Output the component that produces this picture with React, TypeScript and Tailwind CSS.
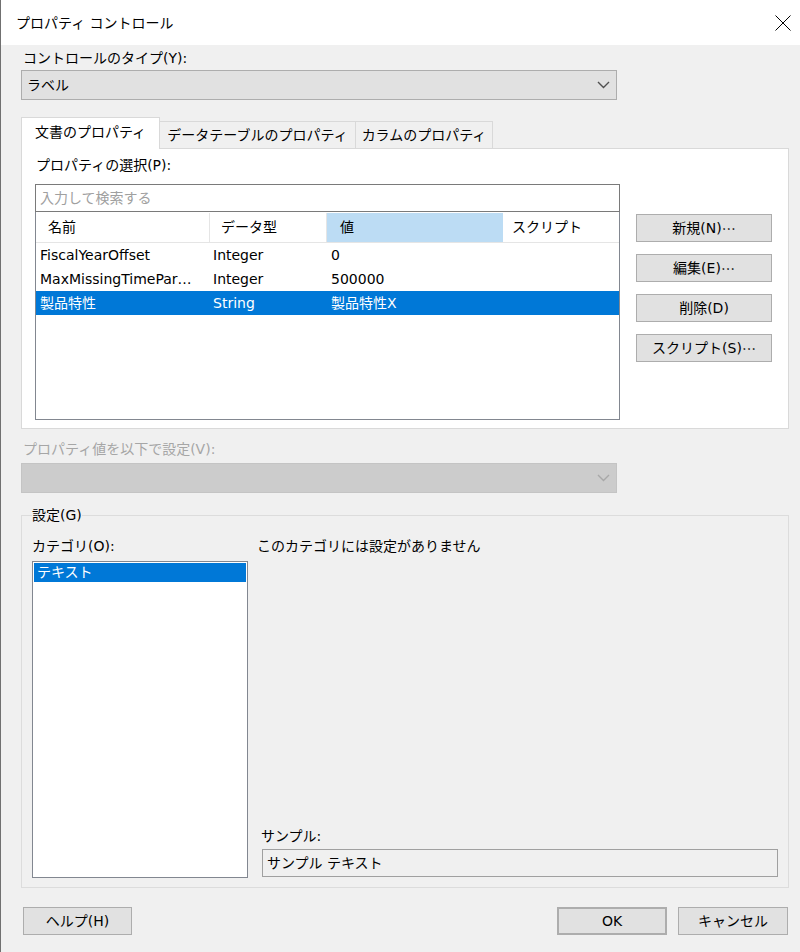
import React from 'react';

const Chevron = ({ color }: { color: string }) => (
  <svg width="13" height="8" viewBox="0 0 13 8" fill="none">
    <polyline points="1,1 6.5,6.5 12,1" stroke={color} strokeWidth="1.4" />
  </svg>
);

const Btn = ({ children, className = '' }: { children: React.ReactNode; className?: string }) => (
  <button className={`flex items-center justify-center h-[28px] bg-[#e1e1e1] border border-[#adadad] text-[14px] leading-none text-black ${className}`}>
    {children}
  </button>
);

// centred "…" as the Japanese UI font draws it
const Dots = () => <span className="font-['Noto_Sans_CJK_JP',sans-serif]">…</span>;

const rows = [
  { name: 'FiscalYearOffset', type: 'Integer', value: '0', selected: false },
  { name: 'MaxMissingTimePar…', type: 'Integer', value: '500000', selected: false },
  { name: '製品特性', type: 'String', value: '製品特性X', selected: true },
];

export default function App() {
  return (
    <div className="w-[800px] h-[952px] bg-[#f0f0f0] border-l border-[#707070] text-[14px] text-black font-['DejaVu_Sans','Noto_Sans_CJK_JP',sans-serif] overflow-hidden">
      {/* Title bar */}
      <div className="h-[45px] bg-white flex items-center justify-between pl-[15px] pr-[9px]">
        <span className="text-[14px] leading-[20px]">プロパティ コントロール</span>
        <svg width="16" height="16" viewBox="0 0 16 16" fill="none">
          <path d="M0.5 0.5 L15.5 15.5 M15.5 0.5 L0.5 15.5" stroke="#000" strokeWidth="1" />
        </svg>
      </div>

      <div className="pl-[20px] pt-[3px]">
        {/* Control type */}
        <div className="h-[20px] leading-[20px] pl-[2px]">コントロールのタイプ(Y):</div>
        <div className="mt-[2px] h-[30px] w-[596px] bg-[#e1e1e1] border border-[#adadad] flex items-center justify-between pl-[5px] pr-[6px]">
          <span className="leading-[20px]">ラベル</span>
          <Chevron color="#505050" />
        </div>

        {/* Tabs */}
        <div className="mt-[17px] h-[31px] flex items-end">
          <div className="relative z-10 mb-[-1px] h-[32px] w-[139px] bg-white border border-b-0 border-[#d9d9d9] flex items-center justify-center pb-[2px]">
            文書のプロパティ
          </div>
          <div className="h-[27px] w-[196px] bg-[#f0f0f0] border border-l-0 border-b-0 border-[#d9d9d9] flex items-center justify-center">
            データテーブルのプロパティ
          </div>
          <div className="h-[27px] w-[137px] bg-[#f0f0f0] border border-l-0 border-b-0 border-[#d9d9d9] flex items-center justify-center">
            カラムのプロパティ
          </div>
        </div>

        {/* Tab panel */}
        <div className="w-[768px] h-[281px] bg-white border border-[#d9d9d9] flex">
          <div className="ml-[13px] w-[585px] flex flex-col">
            <div className="mt-[6px] h-[20px] leading-[20px] pl-[1px]">プロパティの選択(P):</div>
            <div className="mt-[9px] h-[28px] border border-[#7a7a7a] bg-white flex items-center pl-[4px] text-[#a0a0a0]">
              入力して検索する
            </div>
            <div className="h-[208px] border border-t-0 border-[#828790] bg-white flex flex-col">
              {/* Header */}
              <div className="mt-[1px] h-[30px] flex border-b border-[#e5e5e5]">
                <div className="w-[174px] pl-[12px] flex items-center border-r border-[#e5e5e5]">名前</div>
                <div className="w-[117px] pl-[11px] flex items-center border-r border-[#e5e5e5]">データ型</div>
                <div className="w-[176px] pl-[13px] flex items-center bg-[#bcdcf4]">値</div>
                <div className="flex-1 pl-[9px] flex items-center">スクリプト</div>
              </div>
              {rows.map((r) => (
                <div
                  key={r.name}
                  className={`h-[24px] flex items-center whitespace-nowrap ${r.selected ? 'bg-[#0078d7] text-white' : ''}`}
                >
                  <div className="w-[177px] pl-[4px] overflow-hidden">{r.name}</div>
                  <div className="w-[118px]">{r.type}</div>
                  <div className="flex-1">{r.value}</div>
                </div>
              ))}
            </div>
          </div>

          <div className="ml-[16px] mt-[65px] flex flex-col gap-[12px]">
            <Btn className="w-[136px]">新規(N)<Dots /></Btn>
            <Btn className="w-[136px]">編集(E)<Dots /></Btn>
            <Btn className="w-[136px]">削除(D)</Btn>
            <Btn className="w-[136px]">スクリプト(S)<Dots /></Btn>
          </div>
        </div>

        {/* Property value (disabled) */}
        <div className="mt-[10px] h-[20px] leading-[20px] pl-[2px] text-[#a6a6a6]">プロパティ値を以下で設定(V):</div>
        <div className="mt-[4px] h-[30px] w-[596px] bg-[#cccccc] border border-[#c4c4c4] flex items-center justify-end pr-[6px]">
          <Chevron color="#a8a8a8" />
        </div>

        {/* Settings group */}
        <fieldset className="mt-[12px] w-[768px] border border-[#dcdcdc] pl-[10px] pr-[9px] pb-[9px]">
          <legend className="h-[20px] leading-[20px] px-0">設定(G)</legend>
          <div className="flex">
            <div className="flex flex-col">
              <div className="mt-[11px] h-[20px] leading-[20px]">カテゴリ(O):</div>
              <div className="mt-[5px] h-[317px] w-[216px] bg-white border border-[#828790] pt-[1px] px-[1px]">
                <div className="h-[19px] bg-[#0078d7] text-white leading-[19px] pl-[3px]">テキスト</div>
              </div>
            </div>
            <div className="flex-1 flex flex-col justify-between">
              <div className="mt-[11px] ml-[9px] h-[20px] leading-[20px]">このカテゴリには設定がありません</div>
              <div className="mb-[1px]">
                <div className="ml-[13px] h-[20px] leading-[20px]">サンプル:</div>
                <div className="mt-[3px] ml-[14px] w-[516px] h-[28px] bg-[#f0f0f0] border border-[#a0a0a0] flex items-center pl-[4px]">
                  サンプル テキスト
                </div>
              </div>
            </div>
          </div>
        </fieldset>

        {/* Bottom buttons */}
        <div className="mt-[19px] w-[767px] flex items-center justify-between">
          <Btn className="ml-[2px] w-[109px]">ヘルプ(H)</Btn>
          <div className="flex gap-[11px]">
            <Btn className="w-[110px] border-2 border-[#0078d7]">OK</Btn>
            <Btn className="w-[110px]">キャンセル</Btn>
          </div>
        </div>
      </div>
    </div>
  );
}
